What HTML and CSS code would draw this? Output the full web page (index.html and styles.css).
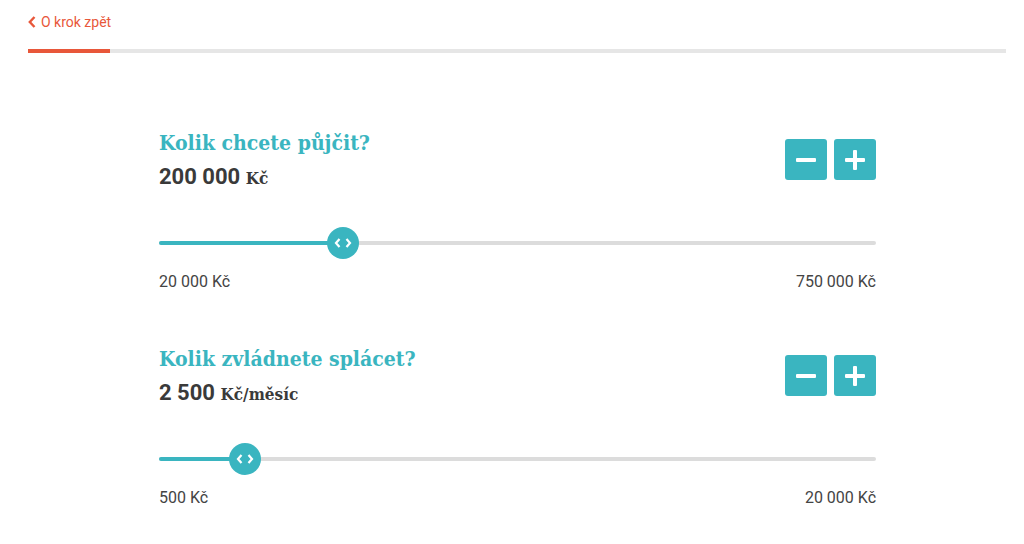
FILE: index.html
```html
<!DOCTYPE html>
<html lang="cs">
<head>
    <meta charset="UTF-8">
    <meta name="viewport" content="width=device-width, initial-scale=1.0">
    <title>Kalkulačka půjčky</title>
    <link rel="stylesheet" href="styles.css">
</head>
<body>
    <!-- Back link + step progress -->
    <div class="top">
        <a href="#" class="back-link">
            <svg width="8" height="12" viewBox="0 0 8 12"><path d="M6.5 1 L1.8 6 L6.5 11" fill="none" stroke="currentColor" stroke-width="2.4"/></svg>
            O krok zpět
        </a>
        <div class="steps"><div class="steps-fill"></div></div>
    </div>

    <div class="calc">
        <!-- Loan amount -->
        <div class="field">
            <div class="field-head">
                <div>
                    <h2 class="field-title">Kolik chcete půjčit?</h2>
                    <div class="field-value">200 000 <span class="unit">Kč</span></div>
                </div>
                <div class="buttons">
                    <button class="btn-step"><svg width="20" height="20" viewBox="0 0 20 20"><rect x="0" y="8" width="20" height="4" rx="1" fill="#fff"/></svg></button>
                    <button class="btn-step"><svg width="20" height="20" viewBox="0 0 20 20"><rect x="0" y="8" width="20" height="4" rx="1" fill="#fff"/><rect x="8" y="0" width="4" height="20" rx="1" fill="#fff"/></svg></button>
                </div>
            </div>
            <div class="slider">
                <div class="track"><div class="track-fill" style="width: 25.7%"></div></div>
                <div class="handle" style="left: 25.7%">
                    <svg width="18" height="12" viewBox="0 0 18 12"><path d="M5.5 2 L2 6 L5.5 10 M12.5 2 L16 6 L12.5 10" fill="none" stroke="#fff" stroke-width="2.2"/></svg>
                </div>
            </div>
            <div class="range">
                <span>20 000 Kč</span>
                <span>750 000 Kč</span>
            </div>
        </div>

        <!-- Monthly payment -->
        <div class="field">
            <div class="field-head">
                <div>
                    <h2 class="field-title">Kolik zvládnete splácet?</h2>
                    <div class="field-value">2 500 <span class="unit">Kč/měsíc</span></div>
                </div>
                <div class="buttons">
                    <button class="btn-step"><svg width="20" height="20" viewBox="0 0 20 20"><rect x="0" y="8" width="20" height="4" rx="1" fill="#fff"/></svg></button>
                    <button class="btn-step"><svg width="20" height="20" viewBox="0 0 20 20"><rect x="0" y="8" width="20" height="4" rx="1" fill="#fff"/><rect x="8" y="0" width="4" height="20" rx="1" fill="#fff"/></svg></button>
                </div>
            </div>
            <div class="slider">
                <div class="track"><div class="track-fill" style="width: 12%"></div></div>
                <div class="handle" style="left: 12%">
                    <svg width="18" height="12" viewBox="0 0 18 12"><path d="M5.5 2 L2 6 L5.5 10 M12.5 2 L16 6 L12.5 10" fill="none" stroke="#fff" stroke-width="2.2"/></svg>
                </div>
            </div>
            <div class="range">
                <span>500 Kč</span>
                <span>20 000 Kč</span>
            </div>
        </div>
    </div>
</body>
</html>
```

FILE: styles.css
```css
body {
    font-family: Roboto, 'Liberation Sans', sans-serif;
    background-color: #fff;
    color: #444;
    margin: 0;
    padding: 0;
}

/* Top bar */
.top {
    padding: 12px 18px 0 28px;
}

.back-link {
    display: inline-flex;
    align-items: center;
    gap: 5px;
    color: #e8573a;
    font-size: 14px;
    text-decoration: none;
    height: 20px;
}

.steps {
    margin-top: 17px;
    height: 4px;
    background-color: #e6e6e6;
}

.steps-fill {
    width: 82px;
    height: 100%;
    background-color: #e8573a;
}

/* Calculator */
.calc {
    width: 717px;
    margin-left: 159px;
    padding-top: 77px;
}

.field {
    margin-bottom: 55px;
}

.field-head {
    display: flex;
    justify-content: space-between;
    align-items: flex-start;
}

.field-title {
    font-family: 'DejaVu Serif Condensed', 'DejaVu Serif', serif;
    font-stretch: condensed;
    font-size: 21px;
    font-weight: bold;
    color: #3ab5c0;
    margin: 0;
    line-height: 26px;
}

.field-value {
    font-size: 22px;
    font-weight: bold;
    color: #3a3a3a;
    margin-top: 8px;
    line-height: 26px;
}

.unit {
    font-family: 'DejaVu Serif Condensed', 'DejaVu Serif', serif;
    font-stretch: condensed;
    font-size: 17px;
}

.buttons {
    display: flex;
    gap: 7px;
    margin-top: 9px;
}

.btn-step {
    width: 42px;
    height: 41px;
    border: none;
    border-radius: 3px;
    background-color: #3ab5c0;
    display: flex;
    align-items: center;
    justify-content: center;
    padding: 0;
    cursor: pointer;
}

/* Slider */
.slider {
    position: relative;
    margin-top: 36px;
    height: 32px;
    display: flex;
    align-items: center;
}

.track {
    width: 100%;
    height: 4px;
    border-radius: 2px;
    background-color: #dcdcdc;
}

.track-fill {
    height: 100%;
    border-radius: 2px;
    background-color: #3ab5c0;
}

.handle {
    position: absolute;
    top: 0;
    width: 32px;
    height: 32px;
    margin-left: -16px;
    border-radius: 50%;
    background-color: #3ab5c0;
    display: flex;
    align-items: center;
    justify-content: center;
}

.range {
    display: flex;
    justify-content: space-between;
    font-size: 16px;
    color: #444;
    margin-top: 13px;
}
```
